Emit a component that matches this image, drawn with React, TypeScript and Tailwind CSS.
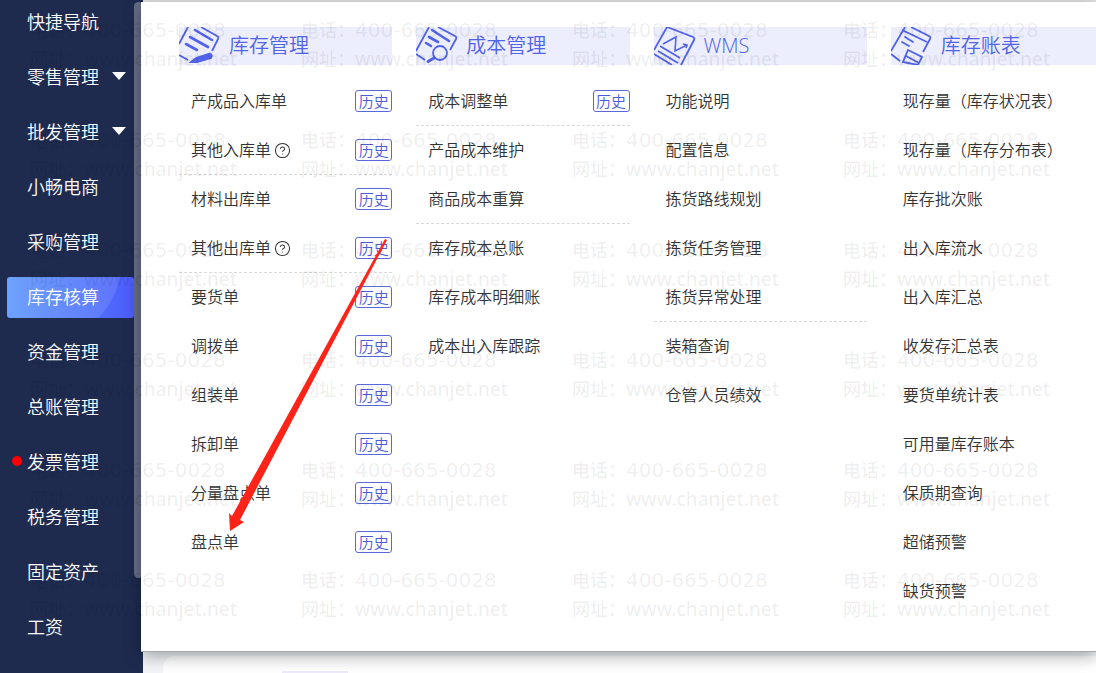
import type { ReactNode } from 'react'
import { CircleQuestionMark } from 'lucide-react'

interface MenuItem {
  label: string
  history?: boolean
  help?: boolean
  divider?: boolean
}

interface MenuSection {
  title: string
  icon: ReactNode
  items: MenuItem[]
}

interface NavItem {
  label: string
  expandable?: boolean
  active?: boolean
  alert?: boolean
}

const navItems: NavItem[] = [
  { label: '快捷导航' },
  { label: '零售管理', expandable: true },
  { label: '批发管理', expandable: true },
  { label: '小畅电商' },
  { label: '采购管理' },
  { label: '库存核算', active: true },
  { label: '资金管理' },
  { label: '总账管理' },
  { label: '发票管理', alert: true },
  { label: '税务管理' },
  { label: '固定资产' },
  { label: '工资' },
]

function SectionIcon({ children }: { children: ReactNode }) {
  return (
    <svg
      className="w-[42px] h-[38px] shrink-0"
      viewBox="0 0 42 38"
      fill="none"
      stroke="#5163e8"
      strokeWidth={1.8}
      aria-hidden="true"
    >
      {children}
    </svg>
  )
}

const stockIcon = (
  <SectionIcon>
    <path d="M0 17 L9 0 M22 0 L38 9 Q40 10 39 12 L33 24 M0 28 L9 33" />
    <path d="M16 3 L33 13 M11 10 L29 20 M7 17 L18 23" strokeWidth={2.6} strokeLinecap="round" />
    <path d="M12 35 L17 31 L31 26.5 Q34 28 32 31 L18 35 Z" fill="#5163e8" />
  </SectionIcon>
)

const costIcon = (
  <SectionIcon>
    <path d="M0 24 L13 0 M22 0 L39 9 Q41 10 40 12 L34 23 M0 27 L9 33" />
    <path d="M16 3 L33 14 M13 10 L22 15 M10 16 L15 19" strokeWidth={2.6} strokeLinecap="round" />
    <circle cx="24" cy="26" r="7" />
    <path d="M18 31 L12 34.5" strokeWidth={3} strokeLinecap="round" />
  </SectionIcon>
)

const wmsIcon = (
  <SectionIcon>
    <path d="M0 23 L13 0 M13 0 L39 10 Q41 11 40 13 L27 38 M0 27 L18 38" />
    <path d="M9 17 L22 10 L21 24 L33 18" strokeWidth={1.6} />
    <path d="M29 17 L33 18 L32 21" strokeWidth={1.6} />
    <path d="M6 19 L26 31 M4 24 L24 36" />
  </SectionIcon>
)

const ledgerIcon = (
  <SectionIcon>
    <path d="M0 24 L14 0 M20 0 L38 9 Q40 10 39 12 L32 25 M0 27 L9 34" />
    <path d="M11 3 L36 15" />
    <path d="M14 10 L22 15 M11 15 L18 19" strokeLinecap="round" />
    <path d="M17 23 L31 30 L27 38 L12 35 Z M15 29 L28 36" />
  </SectionIcon>
)

const sections: MenuSection[] = [
  {
    title: '库存管理',
    icon: stockIcon,
    items: [
      { label: '产成品入库单', history: true },
      { label: '其他入库单', history: true, help: true, divider: true },
      { label: '材料出库单', history: true },
      { label: '其他出库单', history: true, help: true, divider: true },
      { label: '要货单', history: true },
      { label: '调拨单', history: true },
      { label: '组装单', history: true },
      { label: '拆卸单', history: true },
      { label: '分量盘点单', history: true },
      { label: '盘点单', history: true },
    ],
  },
  {
    title: '成本管理',
    icon: costIcon,
    items: [
      { label: '成本调整单', history: true, divider: true },
      { label: '产品成本维护' },
      { label: '商品成本重算', divider: true },
      { label: '库存成本总账' },
      { label: '库存成本明细账' },
      { label: '成本出入库跟踪' },
    ],
  },
  {
    title: 'WMS',
    icon: wmsIcon,
    items: [
      { label: '功能说明' },
      { label: '配置信息' },
      { label: '拣货路线规划' },
      { label: '拣货任务管理' },
      { label: '拣货异常处理', divider: true },
      { label: '装箱查询' },
      { label: '仓管人员绩效' },
    ],
  },
  {
    title: '库存账表',
    icon: ledgerIcon,
    items: [
      { label: '现存量（库存状况表）' },
      { label: '现存量（库存分布表）' },
      { label: '库存批次账' },
      { label: '出入库流水' },
      { label: '出入库汇总' },
      { label: '收发存汇总表' },
      { label: '要货单统计表' },
      { label: '可用量库存账本' },
      { label: '保质期查询' },
      { label: '超储预警' },
      { label: '缺货预警' },
    ],
  },
]

function Sidebar() {
  return (
    <nav className="w-[143px] shrink-0 bg-[#1e2b4f] flex">
      <ul className="flex-1 min-w-0 pl-[7px]">
        {navItems.map(item => (
          <li key={item.label} className="h-[55px] pt-[2px]">
            <button
              className={`relative w-full h-[41px] pl-5 pb-[3px] rounded-[3px] overflow-hidden flex items-center text-[18px] leading-6 text-white ${
                item.active ? 'bg-linear-to-r from-[#5e97fc] to-[#4c5bfb]' : ''
              }`}
            >
              {item.active && (
                <span className="absolute -left-[42px] -top-[92px] w-[156px] h-[156px] rounded-full bg-white/10" />
              )}
              {item.alert && <span className="absolute left-[5px] w-[10px] h-[10px] rounded-full bg-[#ff0000]" />}
              <span className="relative">{item.label}</span>
              {item.expandable && (
                <svg className="w-[14px] h-2 ml-[13px]" viewBox="0 0 14 8" fill="currentColor" aria-hidden="true">
                  <path d="M0 0H14L7 8Z" />
                </svg>
              )}
            </button>
          </li>
        ))}
      </ul>
      {/* Scrollbar thumb */}
      <div className="w-[9px] h-[576px] mt-[2px] rounded-md bg-[#666f87]" />
    </nav>
  )
}

function MenuRow({ item }: { item: MenuItem }) {
  return (
    <li
      className={`h-[49px] pl-3 flex items-center border-b border-dashed ${
        item.divider ? 'border-[#d9d9d9]' : 'border-transparent'
      }`}
    >
      <a href="#" className="pb-[2px] text-[16px] leading-6 whitespace-nowrap">{item.label}</a>
      {item.help && (
        <button aria-label={`${item.label}说明`} className="ml-[3px]">
          <CircleQuestionMark size={17} strokeWidth={1.5} />
        </button>
      )}
      {item.history && (
        <button className="ml-auto w-[37px] h-[22px] border border-[#5a68dc] rounded-[3px] flex items-center justify-center text-[15px] leading-5 text-[#4c5bd6]">
          历史
        </button>
      )}
    </li>
  )
}

function MegaMenu() {
  return (
    <div className="relative -ml-[2px] mt-[2px] pt-[25px] pb-[35px] bg-white border-b border-[#a8a8a8] shadow-[0_4px_16px_rgba(0,0,0,0.35)]">
      <div className="grid grid-cols-4 gap-6 pl-[38px] -mr-2">
        {sections.map(section => (
          <section key={section.title}>
            <h2 className="h-[38px] bg-[#ecedfd] flex items-center gap-2 font-['Open_Sans','Noto_Sans_CJK_SC',sans-serif] text-[20px] leading-7 text-[#5163e8]">
              {section.icon}
              {section.title}
            </h2>
            <ul className="mt-3">
              {section.items.map(item => (
                <MenuRow key={item.label} item={item} />
              ))}
            </ul>
          </section>
        ))}
      </div>
    </div>
  )
}

function Watermark() {
  return (
    <div
      className="absolute inset-0 overflow-hidden pointer-events-none pl-[30px] pt-[15px] text-black/7"
      aria-hidden="true"
    >
      {[0, 1, 2, 3, 4, 5].map(row => (
        <div key={row} className="flex h-[110px]">
          {[0, 1, 2, 3].map(col => (
            <div key={col} className="w-[271px] shrink-0 text-[18px] font-medium whitespace-nowrap">
              <p className="h-[29px] leading-[29px]">
                电话：<span className="font-['DejaVu_Sans'] text-[20px]">400-665-0028</span>
              </p>
              <p className="h-[29px] leading-[29px]">
                网址：<span className="font-['Noto_Sans'] text-[19px]">www.chanjet.net</span>
              </p>
            </div>
          ))}
        </div>
      ))}
    </div>
  )
}

function Arrow() {
  return (
    <svg
      className="absolute left-[228px] top-[239px] w-[160px] h-[293px] pointer-events-none"
      viewBox="0 0 160 293"
      fill="#ff2318"
      aria-hidden="true"
    >
      <path d="M157 0 L159 1 L12 281 L16 283 L2 292 L1 274 L4 277 Z" />
    </svg>
  )
}

export default function App() {
  return (
    <div className="relative min-h-screen flex overflow-hidden bg-[#e4e4e6] text-[#333] font-['Noto_Sans_CJK_SC',sans-serif] font-[350]">
      <Sidebar />
      <main className="flex-1 min-w-0 flex flex-col">
        <MegaMenu />
        {/* Page content peeking out below the menu */}
        <div className="flex-1 flex bg-[#f3f4f8] pl-5 pt-1">
          <div className="flex-1 bg-white rounded-tl-xl pl-[119px] flex items-end">
            <div className="w-[66px] h-[2px] bg-[#f0eafd]" />
          </div>
        </div>
      </main>
      <Watermark />
      <Arrow />
    </div>
  )
}
